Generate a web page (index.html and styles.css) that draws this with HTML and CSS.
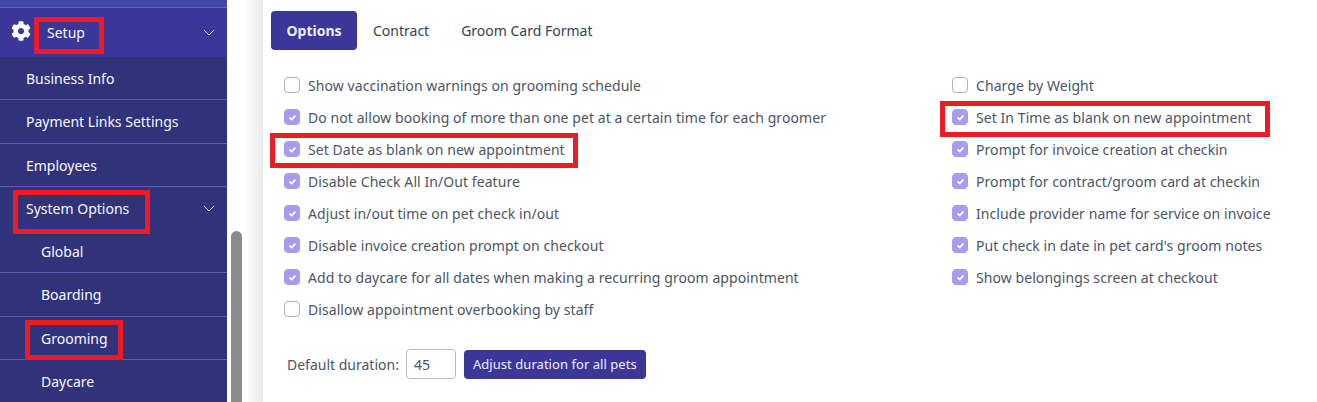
FILE: index.html
```html
<!DOCTYPE html>
<html lang="en">
<head>
<meta charset="utf-8">
<title>Grooming options</title>
<link rel="stylesheet" href="styles.css">
</head>
<body>
<div class="app">
  <nav class="sidebar">
    <div class="top-strip"></div>
    <div class="setup-row">
      <svg class="gear" viewBox="0 0 512 512"><path fill="#fff" d="M487.4 315.7l-42.6-24.6c4.3-23.2 4.3-47 0-70.2l42.6-24.6c4.9-2.8 7.1-8.6 5.5-14-11.1-35.6-30-67.8-54.7-94.6-3.8-4.1-10-5.1-14.8-2.3L380.8 110c-17.9-15.4-38.5-27.3-60.8-35.1V25.8c0-5.6-3.9-10.5-9.4-11.7-36.7-8.2-74.3-7.8-109.2 0-5.5 1.2-9.4 6.1-9.4 11.7V75c-22.2 7.9-42.8 19.8-60.8 35.1L88.7 85.5c-4.9-2.8-11-1.9-14.8 2.3-24.7 26.7-43.6 58.9-54.7 94.6-1.7 5.4.6 11.2 5.5 14L67.3 221c-4.3 23.2-4.3 47 0 70.2l-42.6 24.6c-4.9 2.8-7.1 8.6-5.5 14 11.1 35.6 30 67.8 54.7 94.6 3.8 4.1 10 5.1 14.8 2.3l42.6-24.6c17.9 15.4 38.5 27.3 60.8 35.1v49.2c0 5.6 3.9 10.5 9.4 11.7 36.7 8.2 74.3 7.8 109.2 0 5.5-1.2 9.4-6.1 9.4-11.7v-49.2c22.2-7.9 42.8-19.8 60.8-35.1l42.6 24.6c4.9 2.8 11 1.9 14.8-2.3 24.7-26.7 43.6-58.9 54.7-94.6 1.5-5.5-.7-11.3-5.6-14.1zM256 336c-44.1 0-80-35.9-80-80s35.9-80 80-80 80 35.9 80 80-35.9 80-80 80z"/></svg>
      <span class="setup-label">Setup</span>
      <svg class="chev" viewBox="0 0 12 7"><path d="M1 1l5 5 5-5" fill="none" stroke="#d5d5ee" stroke-width="1"/></svg>
    </div>
    <a class="item h-b">Business Info</a>
    <a class="item h-p">Payment Links Settings</a>
    <a class="item h-e">Employees</a>
    <div class="item h-s no-line">System Options
      <svg class="chev" viewBox="0 0 12 7"><path d="M1 1l5 5 5-5" fill="none" stroke="#d5d5ee" stroke-width="1"/></svg>
    </div>
    <a class="item sub h-g">Global</a>
    <a class="item sub h-bo">Boarding</a>
    <a class="item sub h-gr">Grooming</a>
    <a class="item sub no-line">Daycare</a>
  </nav>
  <div class="scroll-track"><div class="scroll-thumb"></div></div>
  <div class="shade"></div>
  <main class="content">
    <div class="tabs">
      <span class="tab active">Options</span>
      <span class="tab">Contract</span>
      <span class="tab">Groom Card Format</span>
    </div>
    <div class="options">
      <div class="col">
        <label class="opt"><span class="box"></span>Show vaccination warnings on grooming schedule</label>
        <label class="opt"><span class="box on"><svg viewBox="0 0 10 8"><path d="M1.5 4l2.5 2.3L8.5 1.7" fill="none" stroke="#fff" stroke-width="2"/></svg></span>Do not allow booking of more than one pet at a certain time for each groomer</label>
        <label class="opt"><span class="box on"><svg viewBox="0 0 10 8"><path d="M1.5 4l2.5 2.3L8.5 1.7" fill="none" stroke="#fff" stroke-width="2"/></svg></span>Set Date as blank on new appointment</label>
        <label class="opt"><span class="box on"><svg viewBox="0 0 10 8"><path d="M1.5 4l2.5 2.3L8.5 1.7" fill="none" stroke="#fff" stroke-width="2"/></svg></span>Disable Check All In/Out feature</label>
        <label class="opt"><span class="box on"><svg viewBox="0 0 10 8"><path d="M1.5 4l2.5 2.3L8.5 1.7" fill="none" stroke="#fff" stroke-width="2"/></svg></span>Adjust in/out time on pet check in/out</label>
        <label class="opt"><span class="box on"><svg viewBox="0 0 10 8"><path d="M1.5 4l2.5 2.3L8.5 1.7" fill="none" stroke="#fff" stroke-width="2"/></svg></span>Disable invoice creation prompt on checkout</label>
        <label class="opt"><span class="box on"><svg viewBox="0 0 10 8"><path d="M1.5 4l2.5 2.3L8.5 1.7" fill="none" stroke="#fff" stroke-width="2"/></svg></span>Add to daycare for all dates when making a recurring groom appointment</label>
        <label class="opt"><span class="box"></span>Disallow appointment overbooking by staff</label>
      </div>
      <div class="col col-right">
        <label class="opt"><span class="box"></span>Charge by Weight</label>
        <label class="opt"><span class="box on"><svg viewBox="0 0 10 8"><path d="M1.5 4l2.5 2.3L8.5 1.7" fill="none" stroke="#fff" stroke-width="2"/></svg></span>Set In Time as blank on new appointment</label>
        <label class="opt"><span class="box on"><svg viewBox="0 0 10 8"><path d="M1.5 4l2.5 2.3L8.5 1.7" fill="none" stroke="#fff" stroke-width="2"/></svg></span>Prompt for invoice creation at checkin</label>
        <label class="opt"><span class="box on"><svg viewBox="0 0 10 8"><path d="M1.5 4l2.5 2.3L8.5 1.7" fill="none" stroke="#fff" stroke-width="2"/></svg></span>Prompt for contract/groom card at checkin</label>
        <label class="opt"><span class="box on"><svg viewBox="0 0 10 8"><path d="M1.5 4l2.5 2.3L8.5 1.7" fill="none" stroke="#fff" stroke-width="2"/></svg></span>Include provider name for service on invoice</label>
        <label class="opt"><span class="box on"><svg viewBox="0 0 10 8"><path d="M1.5 4l2.5 2.3L8.5 1.7" fill="none" stroke="#fff" stroke-width="2"/></svg></span>Put check in date in pet card's groom notes</label>
        <label class="opt"><span class="box on"><svg viewBox="0 0 10 8"><path d="M1.5 4l2.5 2.3L8.5 1.7" fill="none" stroke="#fff" stroke-width="2"/></svg></span>Show belongings screen at checkout</label>
      </div>
    </div>
    <div class="duration">
      <span>Default duration:</span>
      <span class="num">45</span>
      <button class="btn">Adjust duration for all pets</button>
    </div>
  </main>
</div>
<div class="mark m1"></div>
<div class="mark m2"></div>
<div class="mark m3"></div>
<div class="mark m4"></div>
<div class="mark m5"></div>
</body>
</html>
```

FILE: styles.css
```css
* { box-sizing: border-box; }
html, body { margin: 0; height: 402px; overflow: hidden; background: #fff; }
body { font-family: "Noto Sans", "Liberation Sans", sans-serif; font-size: 14px; position: relative; }
.app { display: flex; height: 402px; }
.sidebar { width: 227px; flex: none; background: #31337a; color: #f7f7fd; overflow: hidden; }
.top-strip { height: 8px; background: #4347a8; border-bottom: 1px solid #6264bd; }
.setup-row { height: 49px; background: #3a3799; display: flex; align-items: center; padding: 0 12px 0 11px; }
.gear { width: 20px; height: 20px; margin-top: -3px; }
.setup-label { margin-left: 16px; flex: 1; margin-top: -1px; }
.chev { width: 12px; height: 7px; margin-left: auto; }
.item { display: flex; align-items: center; padding: 0 12px 0 26px; border-bottom: 1px solid #5c5db5; height: 43.5px; }
.h-b { height: 43px; }
.h-p { height: 44px; }
.h-e { height: 43px; }
.h-s { height: 43px; }
.sub { padding-left: 41px; }
.h-g { height: 43px; }
.h-bo { height: 44px; }
.h-gr { height: 43px; }
.no-line { border-bottom: 0; }
.scroll-track { width: 18px; flex: none; position: relative; background: #fff; }
.scroll-thumb { position: absolute; left: 4px; top: 231px; bottom: 0; width: 11px; background: #8b8b8b; border-radius: 6px 6px 0 0; }
.shade { width: 18px; flex: none; background: linear-gradient(to right, #fff, #ebebeb); }
.content { flex: 1; min-width: 0; padding: 11px 0 0 8px; color: #4b5563; }
.tabs { display: flex; align-items: center; height: 39px; }
.tab { padding: 0 16px; color: #374151; }
.tab.active { width: 86px; padding: 0; justify-content: center; background: #3a3799; color: #e9f0fb; font-weight: 700; height: 39px; display: flex; align-items: center; border-radius: 4px; }
.options { display: flex; margin-top: 19px; padding-left: 13px; letter-spacing: .07px; }
.col { width: 668px; flex: none; }
.col-right { width: 360px; }
.opt { display: flex; align-items: center; height: 32px; white-space: nowrap; }
.box { width: 16px; height: 16px; margin-right: 8px; border: 1px solid #b0b4bc; border-radius: 4px; background: #fff; display: flex; align-items: center; justify-content: center; flex: none; }
.box.on { background: #a99cf0; border-color: #a99cf0; }
.box svg { width: 9px; height: 7px; }
.duration { display: flex; align-items: center; margin: 24px 0 0 16px; }
.num { width: 50px; height: 30px; border: 1px solid #b8b8b8; border-radius: 4px; margin-left: 7px; padding-left: 7px; display: flex; align-items: center; }
.btn { height: 29px; margin-left: 8px; padding: 0 9px; border: 0; border-radius: 4px; background: #3a3799; color: #eef; font: 13px "Noto Sans", "Liberation Sans", sans-serif; letter-spacing: .05px; }
.mark { position: absolute; border: 5px solid #ed1c24; }
.m1 { left: 34px; top: 17px; width: 70px; height: 37px; }
.m2 { left: 13px; top: 190px; width: 137px; height: 44px; }
.m3 { left: 25px; top: 320px; width: 98px; height: 40px; }
.m4 { left: 270px; top: 133px; width: 308px; height: 35px; }
.m5 { left: 940px; top: 101px; width: 330px; height: 36px; }
```
